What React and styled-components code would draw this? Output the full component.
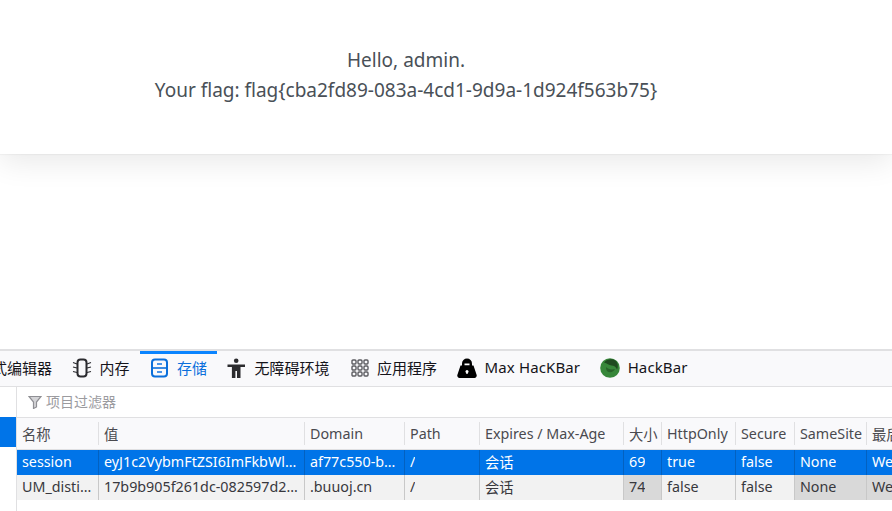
import React from 'react';
import styled, { createGlobalStyle } from 'styled-components';

const columns = [
  { key: 'name', title: '名称', width: 82 },
  { key: 'value', title: '值', width: 206 },
  { key: 'domain', title: 'Domain', width: 100 },
  { key: 'path', title: 'Path', width: 75 },
  { key: 'expires', title: 'Expires / Max-Age', width: 144 },
  { key: 'size', title: '大小', width: 38, shaded: true },
  { key: 'httpOnly', title: 'HttpOnly', width: 74 },
  { key: 'secure', title: 'Secure', width: 59 },
  { key: 'sameSite', title: 'SameSite', width: 72, shaded: true },
  { key: 'last', title: '最后访问', width: 90, shaded: true },
];

const cookies = [
  { id: 1, selected: true, name: 'session', value: 'eyJ1c2VybmFtZSI6ImFkbWluIn0.YJk9Qw.flask-cookie', domain: 'af77c550-b6d1-4c2e.node3.buuoj.cn', path: '/', expires: '会话', size: '69', httpOnly: 'true', secure: 'false', sameSite: 'None', last: 'Wed, 12 May' },
  { id: 2, name: 'UM_distinctid', value: '17b9b905f261dc-082597d2c1a8f3-4c3f2d73', domain: '.buuoj.cn', path: '/', expires: '会话', size: '74', httpOnly: 'false', secure: 'false', sameSite: 'None', last: 'Wed, 12 May' },
];

function MemoryIcon() {
  return (
    <svg width="20" height="20" viewBox="0 0 20 20" fill="none" stroke="#2b2b2f">
      <rect x="5.500" y="1.500" width="9" height="17" rx="3" strokeWidth="2" />
      <path d="M5 6 1 4.500M5 10 1 9M5 14.500 1 13.500M15 6l4-1.500M15 10l4-1M15 14.500l4-1" strokeWidth="1.200" />
    </svg>
  );
}

function StorageIcon() {
  return (
    <svg width="20" height="20" viewBox="0 0 20 20" fill="none" stroke="#0a6fdb">
      <rect x="2" y="1.500" width="15" height="17" rx="3" strokeWidth="2" />
      <path d="M2 10h15" strokeWidth="1.600" />
      <path d="M7 6h5M7 14h5" stroke="#4a94e6" strokeWidth="2" />
    </svg>
  );
}

function AccessibilityIcon() {
  return (
    <svg width="20" height="20" viewBox="0 0 20 20" fill="#2b2b2e">
      <circle cx="9.200" cy="2.800" r="2.300" />
      <path d="M.5 6.500H18V9h-4.500v11H10v-7H8.400v7H4.900V9H.5z" />
    </svg>
  );
}

function AppsIcon() {
  return (
    <svg width="20" height="20" viewBox="0 0 20 20" fill="none" stroke="#5c5c61" strokeWidth="1.400">
      {[2, 8, 14].map((y) =>
        [2, 8, 14].map((x) => <rect key={`${x}-${y}`} x={x} y={y} width="4" height="4" rx="1" />)
      )}
    </svg>
  );
}

function LockIcon() {
  return (
    <svg width="20" height="20" viewBox="0 0 20 20">
      <path d="M5 8V5.500a5 5 0 0 1 10 0V8z" fill="#000" />
      <path d="M7.500 5.500h5v2h-5z" fill="#fff" />
      <path d="M3.500 7.500h13l3 9a2.500 2.500 0 0 1-2.500 3.500H3a2.500 2.500 0 0 1-2.500-3.500z" fill="#000" />
      <circle cx="10" cy="13.500" r="1.500" fill="#fff" />
      <path d="M9.300 13.500h1.400v2.500H9.300z" fill="#fff" />
    </svg>
  );
}

function HackBarIcon() {
  return (
    <svg width="20" height="20" viewBox="0 0 20 20" fill="none">
      <circle cx="10" cy="10" r="9.800" fill="#37873a" />
      <path d="M4 4.500C7 .5 13 .5 16 3c2 2.500 2.500 6 1 8.500-1-2.500-3-4-5.500-4C9 7 7 5.500 4 4.500z" fill="#1f4a20" />
      <path d="M6 9c2 2 5 3 9 2-1 3-5 4-7.500 2.500C6.500 12.500 6 11 6 9z" fill="#28632a" />
    </svg>
  );
}

const tabs = [
  { label: '内存', icon: <MemoryIcon /> },
  { label: '存储', icon: <StorageIcon />, active: true },
  { label: '无障碍环境', icon: <AccessibilityIcon /> },
  { label: '应用程序', icon: <AppsIcon /> },
  { label: 'Max HacKBar', icon: <LockIcon />, latin: true },
  { label: 'HackBar', icon: <HackBarIcon />, latin: true },
];

export default function App() {
  return (
    <Page>
      <GlobalStyle />
      <Card>
        <Greeting>
          Hello, admin.
          <br />
          Your flag: flag{'{'}cba2fd89-083a-4cd1-9d9a-1d924f563b75{'}'}
        </Greeting>
      </Card>
      <Blank />
      <DevTools>
        <TabBar>
          <ClippedTab>样式编辑器</ClippedTab>
          {tabs.map((tab) => (
            <Tab key={tab.label} $active={tab.active} $latin={tab.latin}>
              {tab.icon}
              <TabLabel>{tab.label}</TabLabel>
            </Tab>
          ))}
        </TabBar>
        <StoragePanel>
          <Sidebar>
            <SidebarItem />
          </Sidebar>
          <Content>
            <FilterBar>
              <svg width="14" height="14" viewBox="0 0 14 14" fill="#d4d4d7" stroke="#8f8f94" strokeWidth="1.200">
                <path d="M1 1.500h12L8.500 7v5l-3 1.500V7z" />
              </svg>
              <FilterLabel>项目过滤器</FilterLabel>
            </FilterBar>
            <Table>
              <HeaderRow>
                {columns.map((col) => (
                  <HeaderCell key={col.key} $width={col.width}>
                    <CellText>{col.title}</CellText>
                  </HeaderCell>
                ))}
              </HeaderRow>
              {cookies.map((cookie) => (
                <Row key={cookie.id} $selected={cookie.selected}>
                  {columns.map((col) => (
                    <Cell key={col.key} $width={col.width} $selected={cookie.selected} $shaded={col.shaded}>
                      <CellText>{cookie[col.key]}</CellText>
                    </Cell>
                  ))}
                </Row>
              ))}
            </Table>
          </Content>
        </StoragePanel>
      </DevTools>
    </Page>
  );
}

const GlobalStyle = createGlobalStyle`
  html, body {
    margin: 0;
    background: #fff;
  }
`;

const Page = styled.div`
  width: 892px;
  height: 511px;
  display: flex;
  flex-direction: column;
  overflow: hidden;
  background: #fff;
  font-family: "Noto Sans", "Noto Sans CJK SC", sans-serif;
`;

const Card = styled.div`
  height: 154px;
  flex-shrink: 0;
  padding-top: 45px;
  box-sizing: border-box;
  background: #fff;
  box-shadow: 0 1px 1px rgba(0, 0, 0, 0.03), 0 8px 28px rgba(0, 0, 0, 0.09);
`;

const Greeting = styled.div`
  text-align: center;
  color: #495057;
  font-size: 19px;
  line-height: 30px;
  padding-right: 80px;
`;

const Blank = styled.div`
  flex: 1;
`;

const DevTools = styled.div`
  height: 162px;
  box-sizing: border-box;
  flex-shrink: 0;
  display: flex;
  flex-direction: column;
  border-top: 2px solid #e0e0e2;
  background: #fff;
`;

const TabBar = styled.div`
  height: 36px;
  box-sizing: border-box;
  padding-bottom: 1px;
  flex-shrink: 0;
  display: flex;
  align-items: stretch;
  background: #f9f9fb;
  border-bottom: 1px solid #e0e0e2;
  overflow: hidden;
`;

const ClippedTab = styled.div`
  margin-left: -23px;
  width: 85px;
  padding-bottom: 2px;
  flex-shrink: 0;
  display: flex;
  align-items: center;
  font-size: 15px;
  color: #15141a;
  white-space: nowrap;
`;

const Tab = styled.div`
  display: flex;
  align-items: center;
  gap: 7.500px;
  padding: 0 10px;
  font-size: 15px;
  white-space: nowrap;
  letter-spacing: ${({ $latin }) => ($latin ? '0.12px' : '0')};
  color: ${({ $active }) => ($active ? '#0a6fdb' : '#15141a')};
  box-shadow: ${({ $active }) => ($active ? 'inset 0 3px 0 #0a84ff' : 'none')};
`;

const TabLabel = styled.span`
  margin-bottom: 2px;
`;

const StoragePanel = styled.div`
  flex: 1;
  display: flex;
  min-height: 0;
`;

const Sidebar = styled.div`
  width: 17px;
  flex-shrink: 0;
  padding-top: 30px;
  box-sizing: border-box;
  border-right: 1px solid #e0e0e2;
`;

const SidebarItem = styled.div`
  height: 30px;
  background: #0074e8;
`;

const Content = styled.div`
  flex: 1;
  min-width: 0;
  display: flex;
  flex-direction: column;
`;

const FilterBar = styled.div`
  height: 31px;
  flex-shrink: 0;
  display: flex;
  align-items: center;
  gap: 4px;
  padding-left: 11px;
  box-sizing: border-box;
  font-size: 14px;
  color: #9b9b9f;
  border-bottom: 1px solid #e0e0e2;
`;

const FilterLabel = styled.span`
  margin-bottom: 2px;
`;

const Table = styled.div`
  display: flex;
  flex-direction: column;
`;

const HeaderRow = styled.div`
  height: 32px;
  display: flex;
  background: #f9f9fb;
  border-bottom: 1px solid #e0e0e2;
  box-sizing: border-box;
`;

const HeaderCell = styled.div`
  width: ${({ $width }) => $width}px;
  flex-shrink: 0;
  display: flex;
  align-items: center;
  margin: 4px 0;
  padding: 0 2px 0 5px;
  box-sizing: border-box;
  font-size: 14.300px;
  color: #4a4a4f;
  border-right: 1px solid #e0e0e2;
`;

const Row = styled.div`
  height: 25px;
  display: flex;
  background: ${({ $selected }) => ($selected ? '#0074e8' : '#f2f2f2')};
`;

const Cell = styled.div`
  width: ${({ $width }) => $width}px;
  flex-shrink: 0;
  display: flex;
  align-items: center;
  padding: 0 5px 2px;
  box-sizing: border-box;
  font-size: 14.300px;
  color: ${({ $selected }) => ($selected ? '#fff' : '#38383d')};
  background: ${({ $selected, $shaded }) => (!$selected && $shaded ? '#d9d9d9' : 'transparent')};
  border-right: 1px solid ${({ $selected }) => ($selected ? '#0361c0' : '#c8c8c8')};
`;

const CellText = styled.span`
  overflow: hidden;
  white-space: nowrap;
  text-overflow: ellipsis;
`;
